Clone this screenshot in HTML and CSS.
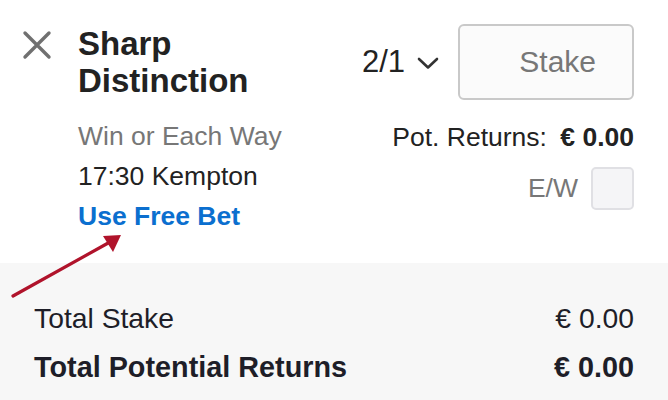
FILE: index.html
```html
<!DOCTYPE html>
<html lang="en">
<head>
<meta charset="utf-8">
<title>Bet slip</title>
<link rel="stylesheet" href="styles.css">
</head>
<body>
<div class="slip">
  <div class="bet">
    <svg class="close" width="30" height="30" viewBox="0 0 30 30" aria-hidden="true">
      <path d="M3 3 L27 27 M27 3 L3 27" stroke="#707070" stroke-width="3.4" stroke-linecap="round" fill="none"/>
    </svg>
    <div class="info">
      <div class="title">Sharp Distinction</div>
      <div class="market">Win or Each Way</div>
      <div class="event">17:30 Kempton</div>
      <a class="freebet" href="#">Use Free Bet</a>
    </div>
    <div class="right">
      <div class="odds-row">
        <span class="odds">2/1</span>
        <svg class="chev" width="22" height="13" viewBox="0 0 22 13" aria-hidden="true">
          <polyline points="2,2 11,10.5 20,2" stroke="#333" stroke-width="2.6" fill="none" stroke-linecap="round" stroke-linejoin="round"/>
        </svg>
        <div class="stake">Stake</div>
      </div>
      <div class="pot">Pot. Returns: <b>€ 0.00</b></div>
      <div class="ew"><span>E/W</span><span class="check"></span></div>
    </div>
  </div>
  <div class="totals">
    <div class="row"><span>Total Stake</span><span>€ 0.00</span></div>
    <div class="row bold"><span>Total Potential Returns</span><span>€ 0.00</span></div>
  </div>
  <svg class="arrow" width="140" height="80" viewBox="0 0 140 80" aria-hidden="true">
    <line x1="13" y1="71" x2="110" y2="17" stroke="#b0132b" stroke-width="3.2" stroke-linecap="round"/>
    <polygon points="121,10 103,11 113,27" fill="#b0132b"/>
  </svg>
</div>
</body>
</html>
```
FILE: styles.css
```css
html, body {
  margin: 0;
  padding: 0;
  background: #ffffff;
}
body {
  font-family: "Liberation Sans", Arial, sans-serif;
  color: #222222;
}
.slip {
  position: relative;
  width: 668px;
  height: 400px;
  overflow: hidden;
}
.bet {
  display: flex;
  align-items: flex-start;
  height: 239px;
  padding: 24px 34px 0 22px;
}
.close {
  flex: none;
  margin-top: 6px;
}
.info {
  flex: 1;
  margin-left: 26px;
  margin-top: 1px;
  display: flex;
  flex-direction: column;
  align-items: flex-start;
}
.title {
  font-size: 33px;
  font-weight: bold;
  line-height: 37px;
  width: 200px;
  color: #222222;
}
.market {
  margin-top: 17px;
  font-size: 26.5px;
  line-height: 40px;
  color: #777777;
}
.event {
  font-size: 26.5px;
  line-height: 40px;
  color: #222222;
}
.freebet {
  font-size: 26.5px;
  line-height: 40px;
  font-weight: bold;
  color: #0b6fcf;
  text-decoration: none;
}
.right {
  display: flex;
  flex-direction: column;
  align-items: flex-end;
}
.odds-row {
  display: flex;
  align-items: center;
}
.odds {
  font-size: 31px;
  color: #222222;
}
.chev {
  margin-left: 12px;
  margin-right: 19px;
  margin-top: 2px;
}
.stake {
  box-sizing: border-box;
  width: 176px;
  height: 76px;
  border: 2px solid #c9c9c9;
  border-radius: 6px;
  background: #fbfbfb;
  font-size: 30px;
  line-height: 72px;
  color: #777777;
  text-align: right;
  padding-right: 36px;
}
.pot {
  margin-top: 17px;
  font-size: 26.5px;
  line-height: 40px;
  color: #222222;
  white-space: pre;
}
.pot b {
  margin-left: 6px;
}
.ew {
  margin-top: 10px;
  display: flex;
  align-items: center;
  font-size: 26.5px;
  color: #777777;
}
.check {
  box-sizing: border-box;
  width: 43px;
  height: 43px;
  margin-left: 13px;
  border: 2px solid #e0e0e4;
  border-radius: 5px;
  background: #f5f5f7;
}
.totals {
  background: #f7f7f7;
  height: 137px;
  box-sizing: border-box;
  padding: 38px 34px 0 34px;
  color: #1e1e28;
}
.row {
  display: flex;
  justify-content: space-between;
  font-size: 28.3px;
  line-height: 34px;
}
.row + .row {
  margin-top: 15px;
}
.row.bold {
  font-weight: bold;
  font-size: 28.8px;
}
.arrow {
  position: absolute;
  left: 0;
  top: 225px;
}
```
